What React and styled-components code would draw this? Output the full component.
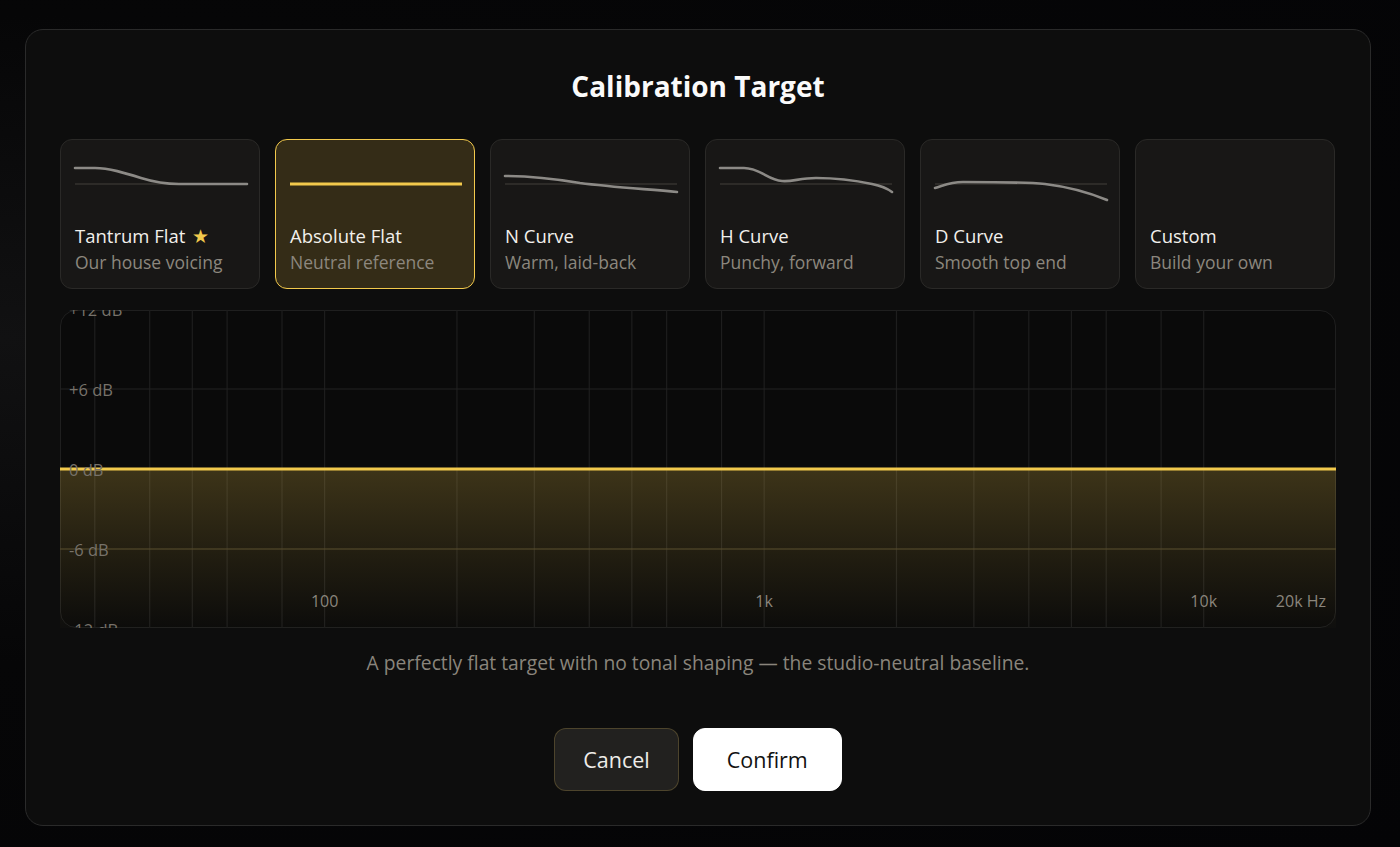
import React from 'react';
import styled, { createGlobalStyle } from 'styled-components';

const GlobalStyle = createGlobalStyle`
	html, body {
		margin: 0;
		padding: 0;
		background: #050507;
	}
	body {
		font-family: "Open Sans", "Noto Sans", sans-serif;
		-webkit-font-smoothing: antialiased;
	}
`;

const YELLOW = '#f2c94c';

const Page = styled.div`
	width: 1400px;
	height: 847px;
	box-sizing: border-box;
	padding: 29px 29px 21px 25px;
	background: radial-gradient(ellipse at 0% 40%, #111112 0%, #060607 45%, #040406 100%);
`;

const Modal = styled.div`
	height: 100%;
	box-sizing: border-box;
	border: 1px solid #2a2a2a;
	border-radius: 18px;
	background: #0d0d0d;
	padding: 38px 34px 34px;
	display: flex;
	flex-direction: column;
	align-items: center;
`;

const Title = styled.h1`
	margin: 0;
	font-size: 28px;
	line-height: 36px;
	font-weight: 700;
	color: #fafafa;
`;

const CardRow = styled.div`
	margin-top: 35px;
	align-self: stretch;
	display: grid;
	grid-template-columns: repeat(6, 200px);
	gap: 15px;
`;

const Card = styled.div`
	height: 150px;
	box-sizing: border-box;
	border-radius: 12px;
	border: ${p => (p.$active ? `1.5px solid ${YELLOW}` : '1px solid #2a2927')};
	background: ${p => (p.$active ? '#342c17' : '#181716')};
	padding: 13px 14px 0;
	display: flex;
	flex-direction: column;
`;

const Preview = styled.svg`
	display: block;
	width: 172px;
	height: 56px;
	overflow: visible;
`;

const CardName = styled.div`
	margin-top: 14px;
	font-size: 18.5px;
	line-height: 25px;
	font-weight: 500;
	color: #f2f0ec;
	white-space: nowrap;
`;

const Star = styled.span`
	color: ${YELLOW};
	margin-left: 2px;
`;

const CardSub = styled.div`
	margin-top: 2px;
	font-size: 17.5px;
	line-height: 24px;
	color: #8c877e;
	white-space: nowrap;
`;

const Chart = styled.div`
	position: relative;
	margin-top: 21px;
	align-self: stretch;
	height: 318px;
	box-sizing: border-box;
	border: 1px solid #1f1f1f;
	border-radius: 16px;
	background: #0a0a0a;
`;

const ChartSvg = styled.svg`
	position: absolute;
	left: -1px;
	top: -1px;
	display: block;
`;

const Description = styled.p`
	margin: 23px 0 0;
	font-size: 19.3px;
	line-height: 24px;
	color: #8a857c;
	white-space: nowrap;
`;

const Actions = styled.div`
	margin-top: 53px;
	display: flex;
	gap: 14px;
`;

const Button = styled.button`
	height: 63px;
	padding: 0 ${p => (p.$primary ? '33px' : '28px')};
	border-radius: 12px;
	font-family: inherit;
	font-size: 21.5px;
	cursor: pointer;
	border: 1px solid ${p => (p.$primary ? '#ffffff' : 'rgba(190, 160, 80, 0.28)')};
	background: ${p => (p.$primary ? '#ffffff' : '#22211f')};
	color: ${p => (p.$primary ? '#111111' : '#efede9')};
`;

const presets = [
	{ name: 'Tantrum Flat', sub: 'Our house voicing', star: true, d: 'M0,15 L20,15 C34,15 50,20 66,25 C82,30 92,31 104,31 L172,31' },
	{ name: 'Absolute Flat', sub: 'Neutral reference', flat: true },
	{ name: 'N Curve', sub: 'Warm, laid-back', d: 'M0,23 C25,23 45,25 75,30 C105,34 140,36 172,39' },
	{ name: 'H Curve', sub: 'Punchy, forward', d: 'M0,15 L24,15 C40,15 48,27 62,28 C72,29 80,25 96,25 C120,25 138,28 152,31 C162,33 168,36 172,39' },
	{ name: 'D Curve', sub: 'Smooth top end', d: 'M0,35 C10,32 15,29 28,29 C60,29 90,29 110,31 C135,34 155,40 172,47' },
	{ name: 'Custom', sub: 'Build your own', empty: true }
];

function CurvePreview({ preset }) {
	if (preset.empty) return <Preview viewBox="0 0 172 56" />;
	if (preset.flat) {
		return (
			<Preview viewBox="0 0 172 56">
				<line x1="0" y1="31" x2="172" y2="31" stroke={YELLOW} strokeWidth="3" />
			</Preview>
		);
	}
	return (
		<Preview viewBox="0 0 172 56">
			<line x1="0" y1="31" x2="172" y2="31" stroke="#35332f" strokeWidth="1.5" />
			<path d={preset.d} fill="none" stroke="#8c8a86" strokeWidth="2.6" strokeLinecap="round" />
		</Preview>
	);
}

const W = 1276;
const H = 318;
const fx = f => ((Math.log10(f) - Math.log10(25)) / Math.log10(800)) * W;
const fy = db => 159 - db * (80 / 6);

const gridFreqs = [];
[10, 100, 1000].forEach(m => {
	[3, 4, 5, 6, 8, 10, 20].forEach(k => {
		const f = k * m;
		if (f >= 30 && f < 20000 && !gridFreqs.includes(f)) gridFreqs.push(f);
	});
});

function ResponseChart() {
	const zero = fy(0);
	return (
		<ChartSvg width={W} height={H} viewBox={`0 0 ${W} ${H}`}>
			<defs>
				<linearGradient id="fill" x1="0" y1="0" x2="0" y2="1">
					<stop offset="0" stopColor={YELLOW} stopOpacity="0.22" />
					<stop offset="0.55" stopColor={YELLOW} stopOpacity="0.1" />
					<stop offset="1" stopColor={YELLOW} stopOpacity="0.01" />
				</linearGradient>
			</defs>
			{gridFreqs.map(f => (
				<line key={f} x1={fx(f)} y1="0" x2={fx(f)} y2={H} stroke="#1e1e1e" strokeWidth="1.2" />
			))}
			{[6, -6].map(db => (
				<line key={db} x1="0" y1={fy(db)} x2={W} y2={fy(db)} stroke="#232323" strokeWidth="1" />
			))}
			<rect x="0" y={zero} width={W} height={H - zero} fill="url(#fill)" />
			<line x1="0" y1={fy(-6)} x2={W} y2={fy(-6)} stroke="rgba(242,201,76,0.18)" strokeWidth="1" />
			<line x1="0" y1={zero} x2={W} y2={zero} stroke={YELLOW} strokeWidth="3" />
			<g fontFamily="'Open Sans', sans-serif" fontSize="16.5" fill="#77726a" dominantBaseline="central">
				{[12, 6, 0, -6, -12].map(db => (
					<text key={db} x="9" y={fy(db)}>
						{db > 0 ? `+${db} dB` : `${db} dB`}
					</text>
				))}
			</g>
			<g fontFamily="'Open Sans', sans-serif" fontSize="16" fill="#8a857c" dominantBaseline="central">
				<text x={fx(100)} y="291" textAnchor="middle">100</text>
				<text x={fx(1000)} y="291" textAnchor="middle">1k</text>
				<text x={fx(10000)} y="291" textAnchor="middle">10k</text>
				<text x={W - 10} y="291" textAnchor="end">20k Hz</text>
			</g>
		</ChartSvg>
	);
}

export default function App() {
	return (
		<>
			<GlobalStyle />
			<Page>
				<Modal>
					<Title>Calibration Target</Title>
					<CardRow>
						{presets.map(p => (
							<Card key={p.name} $active={p.flat}>
								<CurvePreview preset={p} />
								<CardName>
									{p.name}
									{p.star && <Star> ★</Star>}
								</CardName>
								<CardSub>{p.sub}</CardSub>
							</Card>
						))}
					</CardRow>
					<Chart>
						<ResponseChart />
					</Chart>
					<Description>
						A perfectly flat target with no tonal shaping — the studio-neutral baseline.
					</Description>
					<Actions>
						<Button>Cancel</Button>
						<Button $primary>Confirm</Button>
					</Actions>
				</Modal>
			</Page>
		</>
	);
}
